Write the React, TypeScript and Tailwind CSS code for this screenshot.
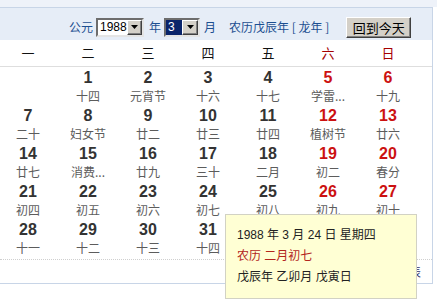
import React from "react";

type Cell = { d?: number; l?: string; red?: boolean } | null;

const rows: Cell[][] = [
  [null, { d: 1, l: "十四" }, { d: 2, l: "元宵节" }, { d: 3, l: "十六" }, { d: 4, l: "十七" }, { d: 5, l: "学雷...", red: true }, { d: 6, l: "十九", red: true }],
  [{ d: 7, l: "二十" }, { d: 8, l: "妇女节" }, { d: 9, l: "廿二" }, { d: 10, l: "廿三" }, { d: 11, l: "廿四" }, { d: 12, l: "植树节", red: true }, { d: 13, l: "廿六", red: true }],
  [{ d: 14, l: "廿七" }, { d: 15, l: "消费..." }, { d: 16, l: "廿九" }, { d: 17, l: "三十" }, { d: 18, l: "二月" }, { d: 19, l: "初二", red: true }, { d: 20, l: "春分", red: true }],
  [{ d: 21, l: "初四" }, { d: 22, l: "初五" }, { d: 23, l: "初六" }, { d: 24, l: "初七" }, { d: 25, l: "初八" }, { d: 26, l: "初九", red: true }, { d: 27, l: "初十", red: true }],
  [{ d: 28, l: "十一" }, { d: 29, l: "十二" }, { d: 30, l: "十三" }, { d: 31, l: "十四" }, null, null, null],
];

const weekdays = ["一", "二", "三", "四", "五", "六", "日"];

function Arrow() {
  return (
    <div className="w-[16px] h-[15px] bg-[#d4d0c8] border border-t-white border-l-white border-r-[#404040] border-b-[#404040] shadow-[inset_-1px_-1px_0_#808080] flex items-center justify-center">
      <svg width="7" height="4" viewBox="0 0 7 4">
        <polygon points="0,0 7,0 3.5,4" fill="#000" />
      </svg>
    </div>
  );
}

export default function App() {
  return (
    <div className="w-[437px] h-[305px] overflow-hidden bg-white relative font-['Liberation_Sans','Noto_Sans_CJK_SC',sans-serif]">
      <div className="h-[7px] bg-[#eef2f9]" />
      <div className="w-[433px] border-t border-r border-b border-[#c8d5e7]">
        {/* header */}
        <div className="h-[32px] bg-[#e6edf7] pt-[6px] flex items-center text-[12px] text-[#1d4f91] font-['Noto_Sans_CJK_SC',sans-serif]">
          <span className="ml-[69px] leading-[14px]">公元</span>
          <div className="ml-[3px] w-[48px] h-[19px] flex items-center bg-white border-2 border-t-[#6d6d6d] border-l-[#6d6d6d] border-r-[#e4e4e4] border-b-[#e4e4e4]">
            <span className="flex-1 pl-[2px] text-[12px] leading-[14px] text-black font-['Liberation_Sans',sans-serif]">1988</span>
            <Arrow />
          </div>
          <span className="ml-[5px] leading-[14px]">年</span>
          <div className="ml-[3px] w-[36px] h-[19px] flex items-center bg-white border-2 border-t-[#6d6d6d] border-l-[#6d6d6d] border-r-[#e4e4e4] border-b-[#e4e4e4]">
            <div className="flex-1 h-[15px] bg-[#0a246a] text-white text-[12px] leading-[15px] pl-[2px] font-['Liberation_Sans',sans-serif]">3</div>
            <Arrow />
          </div>
          <span className="ml-[4px] leading-[14px]">月</span>
          <span className="ml-[13px] leading-[14px] whitespace-pre">农历戊辰年 [ 龙年 ]</span>
          <button className="ml-[17px] w-[65px] h-[21px] bg-[#d4d0c8] border border-t-white border-l-white border-r-[#404040] border-b-[#404040] shadow-[inset_-1px_-1px_0_#808080] text-[13px] leading-[17px] text-black font-['Noto_Sans_CJK_SC',sans-serif]">
            回到今天
          </button>
        </div>
        {/* weekday header */}
        <div className="grid grid-cols-[repeat(7,60px)] h-[27px] border-b border-[#dedede] font-['Noto_Sans_CJK_SC',sans-serif]">
          {weekdays.map((w, i) => (
            <div
              key={w}
              className={`pr-[4px] flex items-center justify-center text-[13px] ${i >= 5 ? "text-[#a50000]" : "text-[#111]"}`}
            >
              {w}
            </div>
          ))}
        </div>
        {/* days */}
        <div className="grid grid-cols-[repeat(7,60px)] grid-rows-[repeat(5,38px)]">
          {rows.flat().map((c, i) => (
            <div key={i} className="pr-[4px] pt-[2px] flex flex-col items-center">
              {c && (
                <>
                  <span className={`text-[16px] font-bold leading-[18px] font-['Liberation_Sans',sans-serif] ${c.red ? "text-[#cc1111]" : "text-[#333]"}`}>
                    {c.d}
                  </span>
                  <span className="text-[12px] leading-[18px] text-[#5c5c5c] font-['Noto_Sans_CJK_SC',sans-serif] whitespace-nowrap">
                    {c.l}
                  </span>
                </>
              )}
            </div>
          ))}
        </div>
        <div className="h-[2px]" />
        <div className="h-[24px] border-t border-dotted border-[#cfcfcf] flex items-center justify-end pr-[11px] text-[12px] text-[#333366] font-['Noto_Sans_CJK_SC',sans-serif]">
          节气表
        </div>
      </div>
      <div className="flex pt-[21px] text-[12px] leading-[12px] font-['Noto_Sans_CJK_SC',sans-serif]">
        <span className="ml-[12px] text-[#cc0000]">宜</span>
        <span className="ml-[23px] text-[#222]">主</span>
        <span className="ml-[4px] text-[#222]">文</span>
      </div>
      {/* tooltip */}
      <div className="absolute left-[225px] top-[214px] w-[192px] h-[85px] border border-[#d2d2c4] bg-[#ffffd4] pl-[11px] pt-[10px] text-[12px] leading-[21px] font-['Liberation_Sans','Noto_Sans_CJK_SC',sans-serif]">
        <div className="text-[#222] whitespace-pre">1988 年 3 月 24 日 星期四</div>
        <div className="text-[#b3261e] whitespace-pre">农历 二月初七</div>
        <div className="text-[#222] whitespace-pre">戊辰年 乙卯月 戊寅日</div>
      </div>
    </div>
  );
}
